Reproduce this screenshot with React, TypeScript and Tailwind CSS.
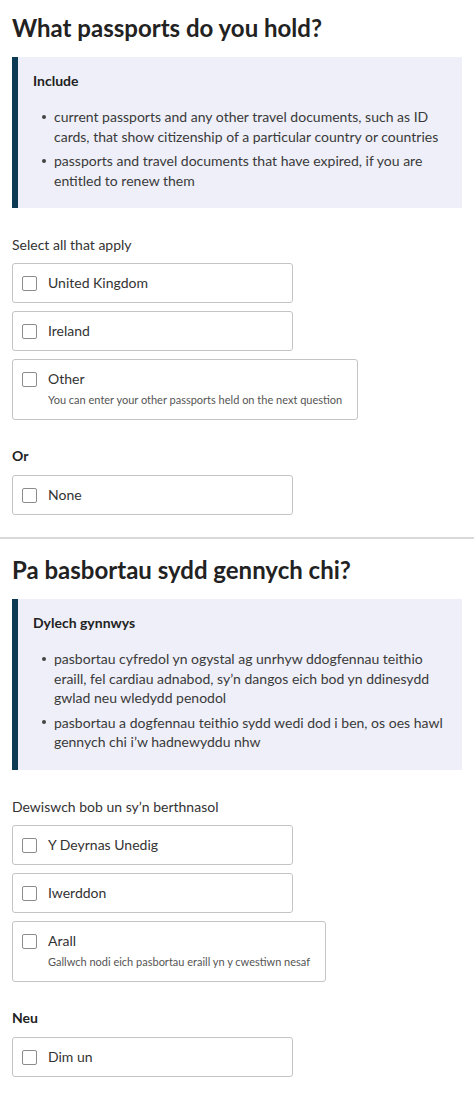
type Option = { label: string; hint?: string };

type Section = {
  title: string;
  panelTitle: string;
  bullets: string[];
  legend: string;
  options: Option[];
  or: string;
  none: string;
};

const sections: Section[] = [
  {
    title: "What passports do you hold?",
    panelTitle: "Include",
    bullets: [
      "current passports and any other travel documents, such as ID cards, that show citizenship of a particular country or countries",
      "passports and travel documents that have expired, if you are entitled to renew them",
    ],
    legend: "Select all that apply",
    options: [
      { label: "United Kingdom" },
      { label: "Ireland" },
      { label: "Other", hint: "You can enter your other passports held on the next question" },
    ],
    or: "Or",
    none: "None",
  },
  {
    title: "Pa basbortau sydd gennych chi?",
    panelTitle: "Dylech gynnwys",
    bullets: [
      "pasbortau cyfredol yn ogystal ag unrhyw ddogfennau teithio eraill, fel cardiau adnabod, sy\u2019n dangos eich bod yn ddinesydd gwlad neu wledydd penodol",
      "pasbortau a dogfennau teithio sydd wedi dod i ben, os oes hawl gennych chi i\u2019w hadnewyddu nhw",
    ],
    legend: "Dewiswch bob un sy\u2019n berthnasol",
    options: [
      { label: "Y Deyrnas Unedig" },
      { label: "Iwerddon" },
      { label: "Arall", hint: "Gallwch nodi eich pasbortau eraill yn y cwestiwn nesaf" },
    ],
    or: "Neu",
    none: "Dim un",
  },
];

function CheckboxRow({ option }: { option: Option }) {
  return (
    <label className="flex min-w-[281px] items-start rounded-[3px] border border-[#c4c4c4] bg-white pl-[9px] pr-[15px] pt-[9px] pb-[9px]">
      <span className="mt-[3px] h-[15px] w-[15px] shrink-0 rounded-[2px] border-[1.5px] border-[#8c8c8c] bg-white" />
      <span className="ml-[11px] flex flex-col">
        <span className="text-[14px] leading-[20px] text-[#333]">{option.label}</span>
        {option.hint && (
          <span className="mt-[3px] mb-[2px] text-[11px] leading-[16px] text-[#555]">{option.hint}</span>
        )}
      </span>
    </label>
  );
}

function Question({ s }: { s: Section }) {
  return (
    <div className="px-3">
      <h1 className="text-[24px] font-bold leading-[30px] text-[#222]">{s.title}</h1>
      <div className="mt-[14px] border-l-[6px] border-[#0d3a53] bg-[#eeeff8] pl-[15px] pr-4 pt-[14px] pb-[18px]">
        <div className="text-[14px] font-bold leading-[20px] text-[#222]">{s.panelTitle}</div>
        <ul className="mt-[16px] flex flex-col gap-[5px]">
          {s.bullets.map((b) => (
            <li key={b} className="flex text-[14px] leading-[19.5px] text-[#3a3a3a]">
              <span className="flex h-[19.5px] w-[21px] shrink-0 items-center pl-[9px]">
                <span className="h-[4px] w-[4px] rounded-full bg-[#444]" />
              </span>
              <span>{b}</span>
            </li>
          ))}
        </ul>
      </div>
      <div className="mt-[27px] text-[14px] leading-[20px] text-[#333]">{s.legend}</div>
      <div className="mt-[8px] flex flex-col items-start gap-[8px]">
        {s.options.map((o) => (
          <CheckboxRow key={o.label} option={o} />
        ))}
      </div>
      <div className="mt-[26px] text-[14px] font-bold leading-[20px] text-[#222]">{s.or}</div>
      <div className="mt-[9px] flex flex-col items-start">
        <CheckboxRow option={{ label: s.none }} />
      </div>
    </div>
  );
}

export default function App() {
  return (
    <div className="min-h-screen bg-white pt-[13px] font-['Lato','Noto_Sans',sans-serif]">
      <Question s={sections[0]} />
      <div className="mt-[22px] mb-[16px] h-[2px] w-full bg-[#d9d9d9]" />
      <Question s={sections[1]} />
    </div>
  );
}
